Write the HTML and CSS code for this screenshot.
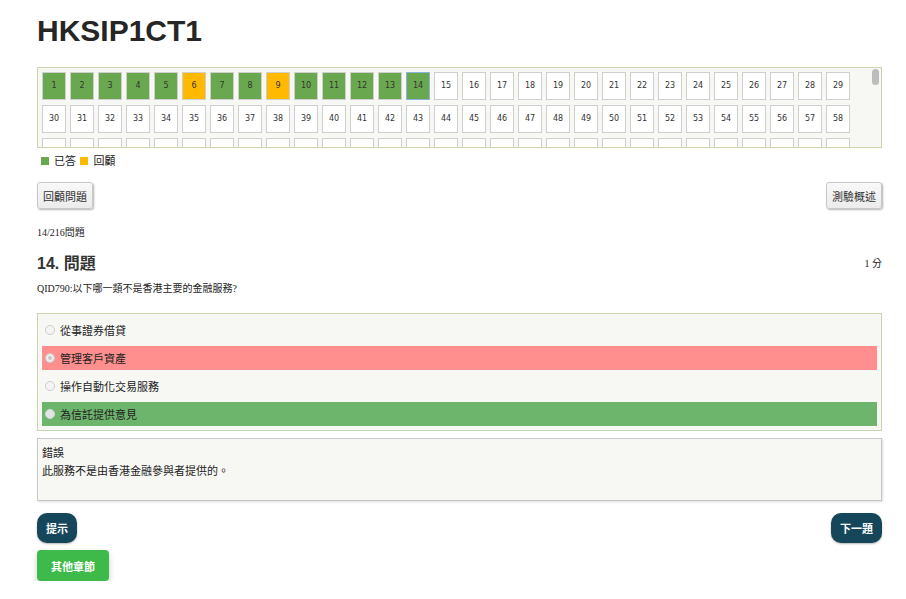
FILE: index.html
```html
<!DOCTYPE html>
<html lang="zh-Hant">
<head>
    <meta charset="UTF-8">
    <title>HKSIP1CT1</title>
    <link rel="stylesheet" href="styles.css">
</head>
<body>

<div class="container">
    <h1 class="title">HKSIP1CT1</h1>

    <div class="grid-box">
        <div class="grid" id="grid"></div>
        <div class="thumb"></div>
    </div>

    <div class="legend">
        <span class="sq sq-done"></span><span class="lbl">已答</span>
        <span class="sq sq-review"></span><span class="lbl">回顧</span>
    </div>

    <div class="row-between tools">
        <button class="btn-grey">回顧問題</button>
        <button class="btn-grey">測驗概述</button>
    </div>

    <div class="count">14/216問題</div>

    <div class="row-between q-head">
        <h2 class="q-title">14. 問題</h2>
        <span class="score">1 分</span>
    </div>

    <div class="q-text">QID790:以下哪一類不是香港主要的金融服務?</div>

    <div class="options">
        <label class="option"><span class="radio"></span>從事證券借貸</label>
        <label class="option wrong"><span class="radio checked"></span>管理客戶資產</label>
        <label class="option"><span class="radio"></span>操作自動化交易服務</label>
        <label class="option right"><span class="radio"></span>為信託提供意見</label>
    </div>

    <div class="explain">
        <div>錯誤</div>
        <div>此服務不是由香港金融參與者提供的。</div>
    </div>

    <div class="row-between">
        <button class="btn-dark">提示</button>
        <button class="btn-dark">下一題</button>
    </div>

    <button class="btn-green">其他章節</button>
</div>

<script>
    var grid = document.getElementById('grid');
    var review = [6, 9];
    for (var i = 1; i <= 216; i++) {
        var cell = document.createElement('div');
        cell.className = 'cell';
        if (i <= 14) cell.className += review.indexOf(i) >= 0 ? ' review' : ' done';
        if (i === 14) cell.className += ' current';
        cell.textContent = i;
        grid.appendChild(cell);
    }
</script>

</body>
</html>
```

FILE: styles.css
```css
body {
    margin: 0;
    font-family: 'Liberation Sans', 'Noto Sans CJK TC', sans-serif;
    color: #333;
    background: #fff;
}
.container {
    width: 845px;
    margin-left: 37px;
}
.title {
    font-size: 30px;
    font-weight: bold;
    margin: 0;
    padding-top: 14px;
    height: 53px;
    line-height: 34px;
    color: #262626;
}
.grid-box {
    position: relative;
    height: 79px;
    overflow: hidden;
    border: 1px solid #c9d6ad;
    background-color: #f7f8f3;
}
/* scroll thumb of the question list */
.thumb {
    position: absolute;
    top: 1px;
    right: 2px;
    width: 7px;
    height: 16px;
    border-radius: 4px;
    background-color: #bdbdbd;
}
.grid {
    display: flex;
    flex-wrap: wrap;
    gap: 5px 4px;
    padding: 4px 0 4px 4px;
    width: 816px;
}
.cell {
    width: 22px;
    height: 26px;
    border: 1px solid #cfcfcf;
    background-color: #fff;
    font-family: 'DejaVu Sans', sans-serif;
    font-size: 8px;
    line-height: 26px;
    text-align: center;
    color: #333;
}
.cell.done {
    background-color: #6aa84f;
}
.cell.review {
    background-color: #ffb900;
}
.cell.current {
    border-color: #8cb3dc;
}
.legend {
    font-family: 'Noto Sans CJK TC', sans-serif;
    font-size: 11px;
    color: #222;
    padding: 4px 0 0 4px;
    height: 30px;
    line-height: 16px;
}
.sq {
    display: inline-block;
    width: 8px;
    height: 8px;
}
.lbl {
    margin-left: 5px;
    margin-right: 2px;
}
.sq-done {
    background-color: #6aa84f;
}
.sq-review {
    background-color: #ffb900;
}
.row-between {
    display: flex;
    justify-content: space-between;
    align-items: center;
}
.btn-grey {
    font-family: 'Noto Sans CJK TC', sans-serif;
    font-size: 11px;
    color: #333;
    height: 27px;
    padding: 0 5px;
    background: linear-gradient(#f8f8f8, #ececec);
    border: 1px solid #c8c8c8;
    border-radius: 3px;
    box-shadow: 1px 1px 2px rgba(0, 0, 0, 0.3);
}
.count {
    font-family: 'Liberation Serif', 'Noto Sans CJK TC', serif;
    font-size: 10px;
    color: #222;
    margin-top: 16px;
    height: 15px;
    line-height: 15px;
}
.q-head {
    margin-top: 10px;
    height: 24px;
}
.q-title {
    font-family: 'Liberation Sans', 'Noto Sans CJK TC', sans-serif;
    font-size: 16px;
    margin: 0;
    font-weight: bold;
    color: #333;
}
.score {
    font-family: 'Liberation Serif', 'Noto Sans CJK TC', serif;
    font-size: 10px;
    color: #222;
}
.q-text {
    font-family: 'Liberation Serif', 'Noto Sans CJK TC', serif;
    font-size: 10px;
    color: #222;
    margin-top: 7px;
    height: 16px;
    line-height: 16px;
}
.options {
    margin-top: 16px;
    border: 1px solid #c9d6ad;
    background-color: #f7f8f3;
    padding: 4px;
    display: flex;
    flex-direction: column;
    gap: 4px;
}
.option {
    display: flex;
    align-items: center;
    height: 24px;
    font-family: 'Noto Sans CJK TC', sans-serif;
    font-size: 11px;
    color: #222;
}
.option.wrong {
    background-color: #ff8f8f;
}
.option.right {
    background-color: #6db46c;
}
.radio {
    width: 8px;
    height: 8px;
    border: 1px solid #ccc;
    border-radius: 50%;
    background-color: #f4f4f4;
    margin: 0 5px 0 3px;
}
.radio.checked {
    background-color: #c8c8c8;
    box-shadow: inset 0 0 0 2px #eee;
}
.option.right .radio {
    background-color: #e4e4e4;
    border-color: #d8d8d8;
}
.explain {
    margin-top: 7px;
    height: 57px;
    border: 1px solid #c8c8c8;
    box-shadow: 1px 1px 2px rgba(0, 0, 0, 0.15);
    background-color: #f7f8f3;
    padding: 4px 4px 0 4px;
    font-family: 'Noto Sans CJK TC', sans-serif;
    font-size: 11px;
    line-height: 18px;
    color: #222;
}
.btn-dark {
    font-family: 'Noto Sans CJK TC', sans-serif;
    font-size: 11px;
    font-weight: bold;
    color: #fff;
    background-color: #15465a;
    border: none;
    border-radius: 10px;
    height: 30px;
    padding: 0 9px;
    margin-top: 12px;
    box-shadow: 0 1px 2px rgba(0, 0, 0, 0.3);
}
.btn-green {
    display: block;
    font-family: 'Noto Sans CJK TC', sans-serif;
    font-size: 11px;
    font-weight: bold;
    color: #fff;
    background-color: #3dba4a;
    border: none;
    border-radius: 4px;
    width: 72px;
    height: 31px;
    margin-top: 7px;
    box-shadow: 0 3px 6px rgba(0, 0, 0, 0.2);
}
```
